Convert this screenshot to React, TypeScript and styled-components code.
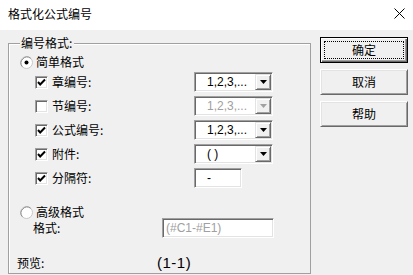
import React from "react";
import styled, { createGlobalStyle } from "styled-components";

const GlobalStyle = createGlobalStyle`
  html, body {
    margin: 0;
    padding: 0;
    background: #f0f0f0;
  }
  body {
    font-family: "Noto Sans CJK SC", "Liberation Sans", sans-serif;
    font-size: 12px;
    color: #000;
  }
`;

const Window = styled.div`
  width: 413px;
  height: 275px;
  display: flex;
  flex-direction: column;
  overflow: hidden;
`;

const TitleBar = styled.div`
  height: 30px;
  box-sizing: border-box;
  background: #fff;
  display: flex;
  align-items: center;
  justify-content: space-between;
  padding: 0 8px 3px 8px;
`;

const Title = styled.span`
  font-size: 12px;
  line-height: 14px;
`;

const Body = styled.div`
  flex: 1;
  display: flex;
  padding-left: 8px;
`;

const GroupBox = styled.div`
  position: relative;
  margin-top: 13px;
  width: 303px;
  height: 231px;
  box-sizing: border-box;
  border: 1px solid #a0a0a0;
  box-shadow: inset 1px 1px 0 #fff;
  padding: 8px 0 0 8px;
  display: flex;
  flex-direction: column;
`;

const Legend = styled.span`
  position: absolute;
  top: -9px;
  left: 11px;
  padding: 0 2px 0 1px;
  line-height: 16px;
  background: #f0f0f0;
`;

const RadioRow = styled.div<{ $h: number; $mt?: number }>`
  display: flex;
  align-items: center;
  gap: 3px;
  height: ${(p) => p.$h}px;
  margin-top: ${(p) => p.$mt ?? 0}px;
  margin-left: 3px;
  line-height: 14px;
`;

const Rows = styled.div`
  display: flex;
  flex-direction: column;
  gap: 4px;
`;

const OptionRow = styled.div`
  display: flex;
  align-items: center;
  height: 20px;
  padding-left: 18px;
`;

const CheckLabel = styled.label`
  width: 159px;
  display: flex;
  align-items: center;
  gap: 4px;
  line-height: 14px;
`;

const CheckBox = styled.span`
  width: 13px;
  height: 13px;
  box-sizing: border-box;
  background: #fff;
  border-top: 1px solid #a0a0a0;
  border-left: 1px solid #a0a0a0;
  border-right: 1px solid #fff;
  border-bottom: 1px solid #fff;
  box-shadow: inset 1px 1px 0 #696969, inset -1px -1px 0 #e3e3e3;
  display: flex;
  align-items: center;
  justify-content: center;
`;

const Sunken = styled.div<{ $w: number }>`
  width: ${(p) => p.$w}px;
  height: 20px;
  box-sizing: border-box;
  background: #fff;
  border-top: 1px solid #a0a0a0;
  border-left: 1px solid #a0a0a0;
  border-right: 1px solid #fff;
  border-bottom: 1px solid #fff;
  box-shadow: inset 1px 1px 0 #696969, inset -1px -1px 0 #e3e3e3;
  padding: 1px;
  display: flex;
  align-items: center;
`;

const FieldText = styled.span<{ $pad: number; $disabled?: boolean }>`
  flex: 1;
  padding-left: ${(p) => p.$pad}px;
  font-family: "Liberation Sans", Arial, sans-serif;
  font-size: 12px;
  line-height: 14px;
  color: ${(p) => (p.$disabled ? "#a0a0a0" : "#000")};
  white-space: nowrap;
  overflow: hidden;
`;

const DropButton = styled.span`
  width: 16px;
  height: 16px;
  box-sizing: border-box;
  background: #f0f0f0;
  border-top: 1px solid #e3e3e3;
  border-left: 1px solid #e3e3e3;
  border-right: 1px solid #696969;
  border-bottom: 1px solid #696969;
  box-shadow: inset 1px 1px 0 #fff, inset -1px -1px 0 #a0a0a0;
  display: flex;
  align-items: center;
  justify-content: center;
`;

const FormatRow = styled.div`
  display: flex;
  align-items: center;
  height: 20px;
  padding-left: 16px;
`;

const FormatLabel = styled.span`
  width: 129px;
  line-height: 14px;
`;

const PreviewRow = styled.div`
  display: flex;
  align-items: center;
  height: 16px;
  margin-top: 17px;
`;

const PreviewLabel = styled.span`
  width: 140px;
  line-height: 14px;
`;

const PreviewValue = styled.span`
  font-family: "Liberation Sans", Arial, sans-serif;
  font-size: 15px;
  font-weight: 400;
  line-height: 16px;
  letter-spacing: 0.5px;
`;

const ButtonColumn = styled.div`
  margin-left: 9px;
  padding-top: 7px;
  display: flex;
  flex-direction: column;
  gap: 6px;
`;

const DialogButton = styled.button<{ $default?: boolean }>`
  width: 88px;
  height: 26px;
  box-sizing: border-box;
  margin: 0;
  background: #f0f0f0;
  font-family: "Noto Sans CJK SC", sans-serif;
  font-size: 12px;
  font-weight: 400;
  color: #000;
  display: flex;
  align-items: stretch;
  ${(p) =>
    p.$default
      ? `
    border: 1px solid #000;
    padding: 3px;
    box-shadow: inset 1px 1px 0 #fff, inset -1px -1px 0 #696969, inset -2px -2px 0 #a0a0a0;
  `
      : `
    border-top: 1px solid #fff;
    border-left: 1px solid #fff;
    border-right: 1px solid #696969;
    border-bottom: 1px solid #696969;
    padding: 2px;
    box-shadow: inset 1px 1px 0 #e3e3e3, inset -1px -1px 0 #a0a0a0;
  `}
`;

const ButtonFace = styled.span<{ $focus?: boolean }>`
  flex: 1;
  display: flex;
  align-items: center;
  justify-content: center;
  line-height: 14px;
  border: 1px ${(p) => (p.$focus ? "dotted #000" : "solid transparent")};
`;

const Check = () => (
  <svg width="9" height="9" viewBox="0 0 9 9">
    <polyline points="1,4 3.2,6.5 8,1.5" fill="none" stroke="#000" strokeWidth="2" />
  </svg>
);

const Radio = ({ checked }: { checked?: boolean }) => (
  <svg width="13" height="13" viewBox="0 0 13 13">
    <circle cx="6.5" cy="6.5" r="6" fill="#fff" stroke="#c8c8c8" strokeWidth="1" />
    <path d="M2.3 10.7 A6 6 0 0 1 10.7 2.3" fill="none" stroke="#8a8a8a" strokeWidth="1" />
    {checked && <circle cx="6.5" cy="6.5" r="2" fill="#000" />}
  </svg>
);

const Arrow = ({ disabled }: { disabled?: boolean }) => (
  <svg width="7" height="4" viewBox="0 0 7 4">
    <polygon points="0,0 7,0 3.5,4" fill={disabled ? "#a0a0a0" : "#000"} />
  </svg>
);

const CloseIcon = () => (
  <svg width="11" height="11" viewBox="0 0 11 11">
    <path d="M0.5 0.5 L10.5 10.5 M10.5 0.5 L0.5 10.5" stroke="#000" strokeWidth="1" />
  </svg>
);

type Option = {
  label: string;
  checked: boolean;
  value: string;
  kind: "combo" | "text";
  disabled?: boolean;
};

const options: Option[] = [
  { label: "章编号:", checked: true, value: "1,2,3,...", kind: "combo" },
  { label: "节编号:", checked: false, value: "1,2,3,...", kind: "combo", disabled: true },
  { label: "公式编号:", checked: true, value: "1,2,3,...", kind: "combo" },
  { label: "附件:", checked: true, value: "( )", kind: "combo" },
  { label: "分隔符:", checked: true, value: "-", kind: "text" },
];

export default function App() {
  return (
    <Window>
      <GlobalStyle />
      <TitleBar>
        <Title>格式化公式编号</Title>
        <CloseIcon />
      </TitleBar>
      <Body>
        <GroupBox>
          <Legend>编号格式:</Legend>
          <RadioRow $h={20}>
            <Radio checked />
            <span>简单格式</span>
          </RadioRow>
          <Rows>
            {options.map((o) => (
              <OptionRow key={o.label}>
                <CheckLabel>
                  <CheckBox>{o.checked && <Check />}</CheckBox>
                  <span>{o.label}</span>
                </CheckLabel>
                {o.kind === "combo" ? (
                  <Sunken $w={79}>
                    <FieldText $pad={11} $disabled={o.disabled}>
                      {o.value}
                    </FieldText>
                    <DropButton>
                      <Arrow disabled={o.disabled} />
                    </DropButton>
                  </Sunken>
                ) : (
                  <Sunken $w={48}>
                    <FieldText $pad={11}>{o.value}</FieldText>
                  </Sunken>
                )}
              </OptionRow>
            ))}
          </Rows>
          <RadioRow $h={12} $mt={18}>
            <Radio />
            <span>高级格式</span>
          </RadioRow>
          <FormatRow>
            <FormatLabel>格式:</FormatLabel>
            <Sunken $w={112}>
              <FieldText $pad={2} $disabled>
                (#C1-#E1)
              </FieldText>
            </Sunken>
          </FormatRow>
          <PreviewRow>
            <PreviewLabel>预览:</PreviewLabel>
            <PreviewValue>(1-1)</PreviewValue>
          </PreviewRow>
        </GroupBox>
        <ButtonColumn>
          <DialogButton $default>
            <ButtonFace $focus>确定</ButtonFace>
          </DialogButton>
          <DialogButton>
            <ButtonFace>取消</ButtonFace>
          </DialogButton>
          <DialogButton>
            <ButtonFace>帮助</ButtonFace>
          </DialogButton>
        </ButtonColumn>
      </Body>
    </Window>
  );
}
